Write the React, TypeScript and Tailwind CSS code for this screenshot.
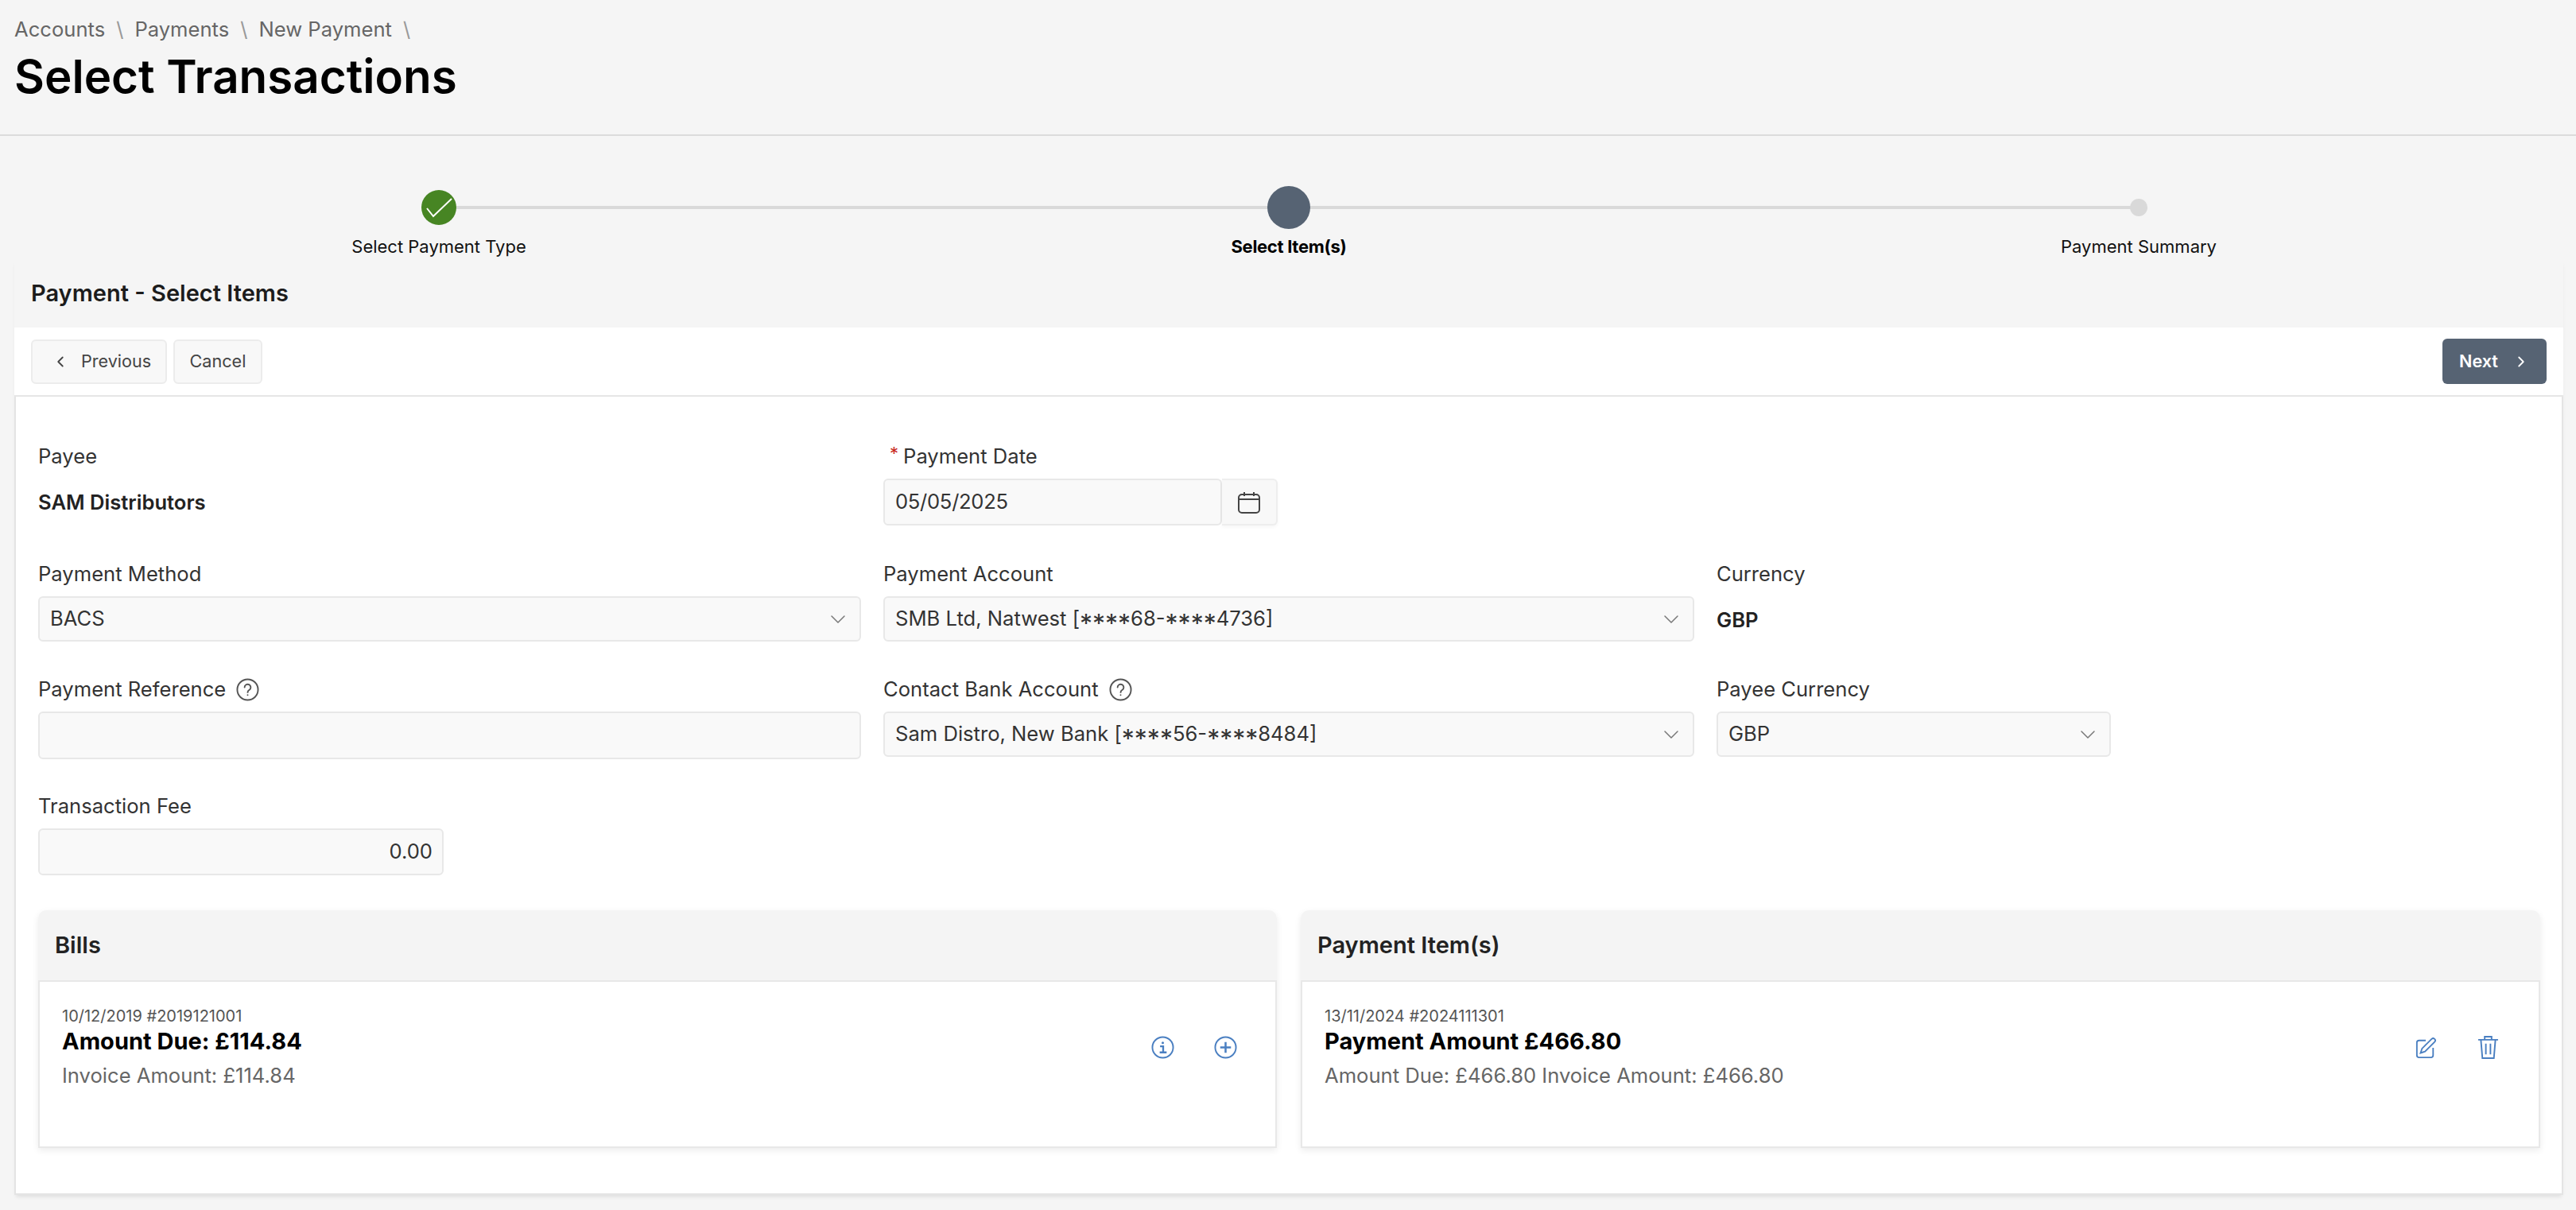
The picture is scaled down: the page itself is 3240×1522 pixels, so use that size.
import { ChevronDown, ChevronLeft, ChevronRight } from "lucide-react";
import type { ReactNode } from "react";

export default function App() {
  return (
    <div className="min-h-[1522px] bg-[#f5f5f5] font-['Inter',sans-serif] text-[#333]">
      <PageHeader />
      <Stepper />
      <section className="mx-[18px] w-[3206px] bg-[#f5f5f5] shadow-[0_4px_5px_-2px_rgba(0,0,0,0.1)]">
        <h2 className="flex h-[85px] items-center px-[21px] pb-[2px] text-[29px] font-semibold text-[#1c1c1c]">
          Payment - Select Items
        </h2>
        <Toolbar />
        <div className="border-x-2 border-b-2 border-[#e4e4e4] bg-white pt-[57px] pr-[28px] pb-[57px] pl-[28px]">
          <PaymentForm />
          <div className="mt-[44px] grid grid-cols-[1558px_1559px] gap-x-[30px]">
            <ListCard title="Bills">
              <div>
                <p className="text-[20px] leading-[26px] text-[#555]">10/12/2019 #2019121001</p>
                <p className="text-[29px] leading-[38px] font-bold text-black">Amount Due: £114.84</p>
                <p className="mt-[8px] text-[25.6px] leading-[32px] text-[#666]">Invoice Amount: £114.84</p>
              </div>
              <div className="flex items-center gap-[50px] pt-[38px] text-[#4a7fc1]">
                <IconInfo />
                <IconPlus />
              </div>
            </ListCard>
            <ListCard title="Payment Item(s)">
              <div>
                <p className="text-[20px] leading-[26px] text-[#555]">13/11/2024 #2024111301</p>
                <p className="text-[29px] leading-[38px] font-bold text-black">Payment Amount £466.80</p>
                <p className="mt-[8px] text-[25.6px] leading-[32px] text-[#666]">
                  Amount Due: £466.80 Invoice Amount: £466.80
                </p>
              </div>
              <div className="mr-[3px] flex items-center gap-[53px] pt-[38px] text-[#4a7fc1]">
                <IconEdit />
                <IconTrash />
              </div>
            </ListCard>
          </div>
        </div>
      </section>
    </div>
  );
}

function PageHeader() {
  return (
    <header className="h-[171px] border-b-2 border-[#dcdcdc] px-[18px] pt-[21px]">
      <nav className="flex h-[32px] items-center text-[25.6px] text-[#666]">
        <span>Accounts</span>
        <span className="px-[14px] text-[#999]">\</span>
        <span>Payments</span>
        <span className="px-[14px] text-[#999]">\</span>
        <span>New Payment</span>
        <span className="px-[14px] text-[#999]">\</span>
      </nav>
      <h1 className="mt-[7px] text-[58.3px] leading-[72px] font-semibold text-black">Select Transactions</h1>
    </header>
  );
}

function Stepper() {
  return (
    <div className="h-[156px] pt-[63px]">
      <div className="relative mr-[550px] ml-[552px] flex h-[54px] items-center justify-between">
        <div className="absolute top-[25px] right-0 left-0 h-[4px] bg-[#d9d9d9]" />
        <StepDot>
          <div className="h-[44px] w-[44px] shrink-0 rounded-full bg-[#478523]">
            <svg width="44" height="44" viewBox="0 0 44 44" fill="none" stroke="white" strokeWidth="2">
              <path d="M7 23 15 33 38 11" />
            </svg>
          </div>
        </StepDot>
        <StepDot>
          <div className="h-[54px] w-[54px] shrink-0 rounded-full bg-[#566373]" />
        </StepDot>
        <StepDot>
          <div className="h-[22px] w-[22px] shrink-0 rounded-full bg-[#d9d9d9]" />
        </StepDot>
      </div>
      <div className="mt-[8px] mr-[550px] ml-[552px] flex justify-between text-[22px] leading-[28px] text-[#111]">
        <StepDot>
          <span className="whitespace-nowrap">Select Payment Type</span>
        </StepDot>
        <StepDot>
          <span className="font-bold tracking-[-0.3px] whitespace-nowrap text-black">Select Item(s)</span>
        </StepDot>
        <StepDot>
          <span className="whitespace-nowrap">Payment Summary</span>
        </StepDot>
      </div>
    </div>
  );
}

function StepDot({ children }: { children: ReactNode }) {
  return <div className="relative flex w-0 justify-center">{children}</div>;
}

function Toolbar() {
  return (
    <div className="flex h-[87px] items-center justify-between border-b-2 border-[#e6e6e6] bg-white pr-[21px] pl-[21px]">
      <div className="flex gap-[8px]">
        <button className="flex h-[56px] w-[171px] items-center gap-[15px] rounded-[6px] border-2 border-[#ececec] bg-[#f8f8f8] pl-[24px] text-[21.6px] text-[#444]">
          <ChevronLeft size={22} strokeWidth={2} />
          Previous
        </button>
        <button className="h-[56px] w-[112px] rounded-[6px] border-2 border-[#ececec] bg-[#f8f8f8] text-[21.6px] text-[#444]">
          Cancel
        </button>
      </div>
      <button className="flex h-[57px] w-[131px] items-center gap-[18px] rounded-[6px] bg-[#566373] pl-[21px] text-[21.6px] font-semibold text-white">
        Next
        <ChevronRight size={22} strokeWidth={2} />
      </button>
    </div>
  );
}

function PaymentForm() {
  return (
    <div className="grid grid-cols-[1035px_1020px_496px] gap-x-[28px]">
      <Field label="Payee" className="h-[148px]">
        <p className="mt-[21px] text-[25.6px] font-semibold text-[#222]">SAM Distributors</p>
      </Field>
      <Field label="Payment Date" required className="h-[148px]">
        <div className="flex h-[59px] w-[496px]">
          <div className="flex h-full w-[426px] items-center rounded-[6px] border-2 border-[#e8e8e8] bg-[#f9f9f9] px-[13px] text-[25.6px] tracking-[-0.3px]">
            05/05/2025
          </div>
          <div className="flex h-full w-[70px] items-center justify-center rounded-r-[6px] border-2 border-l-0 border-[#eeeeee] bg-[#f8f8f8] shadow-[0_2px_4px_rgba(0,0,0,0.04)]">
            <IconCalendar />
          </div>
        </div>
      </Field>
      <div />

      <Field label="Payment Method" className="h-[145px]">
        <SelectBox>BACS</SelectBox>
      </Field>
      <Field label="Payment Account" className="h-[145px]">
        <SelectBox>
          SMB Ltd, Natwest [<Mask />
          68-
          <Mask />
          4736]
        </SelectBox>
      </Field>
      <Field label="Currency" className="h-[145px]">
        <p className="mt-[21px] text-[25.6px] font-semibold text-[#222]">GBP</p>
      </Field>

      <Field label="Payment Reference" help className="h-[147px]">
        <div className="h-[60px] rounded-[6px] border-2 border-[#e8e8e8] bg-[#f9f9f9]" />
      </Field>
      <Field label="Contact Bank Account" help className="h-[147px]">
        <SelectBox>
          Sam Distro, New Bank [<Mask />
          56-
          <Mask />
          8484]
        </SelectBox>
      </Field>
      <Field label="Payee Currency" className="h-[147px]">
        <SelectBox>GBP</SelectBox>
      </Field>

      <Field label="Transaction Fee">
        <div className="flex h-[59px] w-[510px] items-center justify-end rounded-[6px] border-2 border-[#e8e8e8] bg-[#f9f9f9] pr-[12px] text-[25.6px]">
          0.00
        </div>
      </Field>
    </div>
  );
}

function Mask() {
  return <span className="align-[-9px] text-[32px] leading-[0]">****</span>;
}

function Field({
  label,
  required,
  help,
  className,
  children,
}: {
  label: string;
  required?: boolean;
  help?: boolean;
  className?: string;
  children: ReactNode;
}) {
  return (
    <div className={className}>
      <div className="mb-[10px] flex h-[36px] items-center text-[25.6px] whitespace-nowrap">
        {required && <span className="mr-[6px] ml-[8px] -translate-y-[4px] text-[22px] text-[#c9281c]">*</span>}
        {label}
        {help && <IconHelp />}
      </div>
      {children}
    </div>
  );
}

function SelectBox({ children }: { children: ReactNode }) {
  return (
    <div className="flex h-[57px] items-center justify-between rounded-[6px] border-2 border-[#e8e8e8] bg-[#f9f9f9] pr-[11px] pl-[13px] text-[25.6px]">
      <span>{children}</span>
      <ChevronDown size={32} strokeWidth={1.1} className="text-[#777]" />
    </div>
  );
}

function ListCard({ title, children }: { title: string; children: ReactNode }) {
  return (
    <div className="h-[299px] rounded-t-[10px] shadow-[0_3px_8px_rgba(0,0,0,0.08)]">
      <div className="flex h-[88px] items-center rounded-t-[10px] bg-[#f4f4f4] px-[21px] text-[29px] font-semibold text-[#222]">
        {title}
      </div>
      <div className="flex h-[211px] items-start justify-between border-2 border-[#e8e8e8] bg-white pt-[30px] pr-[48px] pl-[28px]">
        {children}
      </div>
    </div>
  );
}

function IconCalendar() {
  return (
    <svg width="28" height="28" viewBox="0 0 28 28" fill="none" stroke="#444" strokeWidth="2">
      <rect x="1" y="4" width="26" height="23" rx="4" />
      <path d="M1 10h26M8 1v5M20 1v5" />
    </svg>
  );
}

function IconHelp() {
  return (
    <svg width="29" height="29" viewBox="0 0 30 30" fill="none" stroke="#555" strokeWidth="2" className="ml-[13px]">
      <circle cx="15" cy="15" r="13.5" />
      <path d="M11 12a4 4 0 1 1 6.2 3.3c-1.4.9-2.2 1.6-2.2 3.2" strokeLinecap="round" />
      <circle cx="15" cy="22" r="1" fill="#555" stroke="none" />
    </svg>
  );
}

function IconInfo() {
  return (
    <svg width="29" height="29" viewBox="0 0 30 30" fill="none" stroke="currentColor" strokeWidth="2">
      <circle cx="15" cy="15" r="13.5" />
      <path d="M11.5 13.5H15.5V21.5M11 21.5H20" strokeWidth="2.4" />
      <circle cx="15" cy="9" r="1.6" fill="currentColor" stroke="none" />
    </svg>
  );
}

function IconPlus() {
  return (
    <svg width="29" height="29" viewBox="0 0 30 30" fill="none" stroke="currentColor" strokeWidth="2">
      <circle cx="15" cy="15" r="13.5" />
      <path d="M15 8v14M8 15h14" strokeWidth="2.6" />
    </svg>
  );
}

function IconEdit() {
  return (
    <svg width="26" height="26" viewBox="0 0 28 28" fill="none" stroke="currentColor" strokeWidth="2">
      <path d="M14 4H5a3 3 0 0 0-3 3v17a3 3 0 0 0 3 3h16a3 3 0 0 0 3-3V14" />
      <path d="M7 21l2-6L22 2a2.5 2.5 0 0 1 4 4L13 19z" />
    </svg>
  );
}

function IconTrash() {
  return (
    <svg width="25" height="29" viewBox="0 0 26 30" fill="none" stroke="currentColor" strokeWidth="2">
      <path d="M0 5h26M3.5 5l2 24h15l2-24M8.5 5V1h9v4M10 10v14M16 10v14" />
    </svg>
  );
}
